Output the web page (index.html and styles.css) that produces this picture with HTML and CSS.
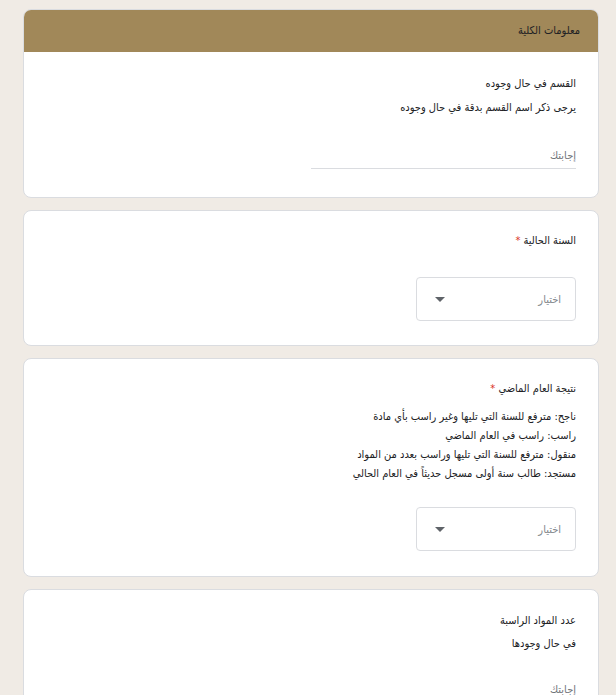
FILE: index.html
```html
<!DOCTYPE html>
<html lang="ar" dir="rtl">
<head>
<meta charset="utf-8">
<link rel="stylesheet" href="styles.css">
</head>
<body>
<div class="form">
  <section class="card header-card">
    <div class="card-head">معلومات الكلية</div>
    <div class="card-body">
      <div class="q-title">القسم في حال وجوده</div>
      <div class="q-desc">يرجى ذكر اسم القسم بدقة في حال وجوده</div>
      <div class="text-input"><span class="placeholder">إجابتك</span></div>
    </div>
  </section>

  <section class="card">
    <div class="card-body">
      <div class="q-title">السنة الحالية <span class="req">*</span></div>
      <div class="select">
        <span class="placeholder">اختيار</span>
        <span class="arrow"></span>
      </div>
    </div>
  </section>

  <section class="card">
    <div class="card-body card-body-lines">
      <div class="q-title">نتيجة العام الماضي <span class="req">*</span></div>
      <div class="q-lines">
        <div>ناجح: مترفع للسنة التي تليها وغير راسب بأي مادة</div>
        <div>راسب: راسب في العام الماضي</div>
        <div>منقول: مترفع للسنة التي تليها وراسب بعدد من المواد</div>
        <div>مستجد: طالب سنة أولى مسجل حديثاً في العام الحالي</div>
      </div>
      <div class="select">
        <span class="placeholder">اختيار</span>
        <span class="arrow"></span>
      </div>
    </div>
  </section>

  <section class="card">
    <div class="card-body card-body-last">
      <div class="q-title">عدد المواد الراسبة</div>
      <div class="q-desc">في حال وجودها</div>
      <div class="text-input"><span class="placeholder">إجابتك</span></div>
    </div>
  </section>
</div>
</body>
</html>
```

FILE: styles.css
```css
html, body {
  margin: 0;
  padding: 0;
}
body {
  background: #f0ebe5;
  font-family: "DejaVu Sans", sans-serif;
  font-stretch: condensed;
  font-size: 11px;
  color: #202124;
}
.form {
  width: 576px;
  margin: 9px 17px 0 23px;
  display: flex;
  flex-direction: column;
  gap: 12px;
}
.card {
  background: #fff;
  border: 1px solid #dadce0;
  border-radius: 8px;
  overflow: hidden;
}
.card-head {
  background: #a18859;
  color: #202124;
  height: 43px;
  line-height: 43px;
  padding: 0 19px;
  margin: -1px -1px 0;
  font-size: 11px;
}
.card-body {
  padding: 21px 22px 24px;
}
.header-card .card-body {
  padding-top: 23px;
  padding-bottom: 28px;
}
.q-title {
  line-height: 18px;
}
.req {
  color: #d93025;
}
.q-desc {
  margin-top: 6px;
  line-height: 18px;
}
.q-lines {
  margin-top: 9px;
  line-height: 19px;
}
.text-input {
  width: 265px;
  margin-top: 30px;
  padding-bottom: 3px;
  line-height: 18px;
  border-bottom: 1px solid #dadce0;
}
.placeholder {
  color: #70757a;
}
.select {
  margin-top: 27px;
  width: 160px;
  height: 44px;
  box-sizing: border-box;
  border: 1px solid #dadce0;
  border-radius: 4px;
  display: flex;
  align-items: center;
  justify-content: space-between;
  padding: 0 14px 0 18px;
}
.card-body-lines {
  padding-bottom: 25px;
}
.card-body-lines .select {
  margin-top: 24px;
}
.select .placeholder {
  color: #80868b;
}
.arrow {
  width: 0;
  height: 0;
  border-left: 5px solid transparent;
  border-right: 5px solid transparent;
  border-top: 5px solid #5f6368;
}
.card-body-last {
  padding-top: 22px;
}
.card-body-last .q-desc {
  margin-top: 5px;
}
.card-body-last .text-input {
  margin-top: 28px;
}
```
